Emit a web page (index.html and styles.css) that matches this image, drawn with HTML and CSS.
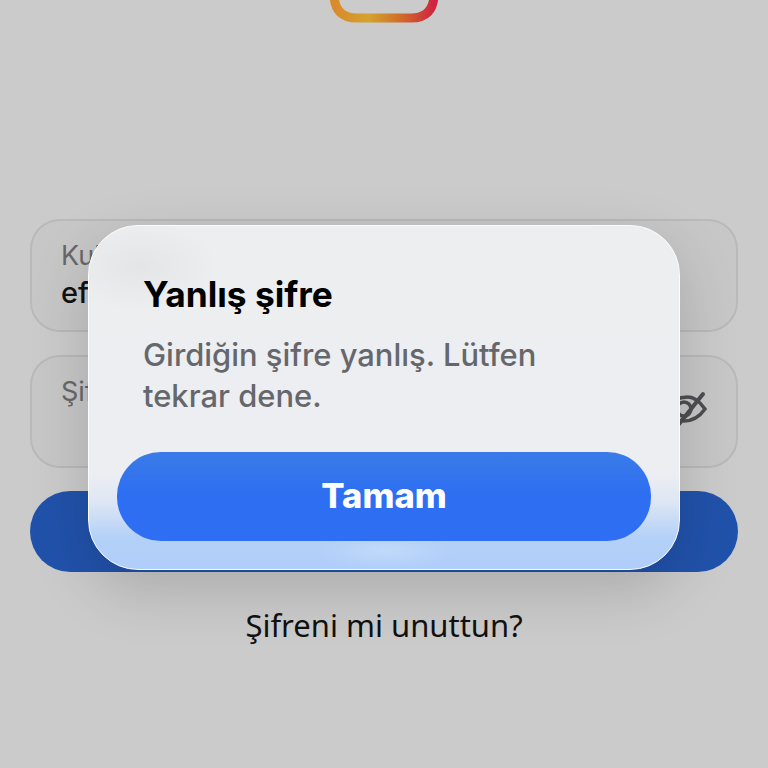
FILE: index.html
```html
<!DOCTYPE html>
<html lang="tr">
<head>
    <meta charset="UTF-8">
    <meta name="viewport" content="width=device-width, initial-scale=1.0">
    <title>Giriş</title>
    <link rel="stylesheet" href="styles.css">
</head>
<body>
    <div class="page">
        <div class="logo">
            <svg width="110" height="23" viewBox="0 0 110 23">
                <defs>
                    <linearGradient id="logo-grad" x1="0" y1="0" x2="1" y2="0">
                        <stop offset="0" stop-color="#d98a2c"/>
                        <stop offset="0.35" stop-color="#d4a22e"/>
                        <stop offset="0.65" stop-color="#d0702a"/>
                        <stop offset="1" stop-color="#d02340"/>
                    </linearGradient>
                </defs>
                <path d="M5 -12 V-6 C5 10 13 18 28 18 H82 C97 18 105 10 105 -6 V-12" fill="none" stroke="url(#logo-grad)" stroke-width="9"/>
            </svg>
        </div>

        <div class="field">
            <div class="field-label">Kullanıcı adı, e-posta veya cep telefonu</div>
            <div class="field-value">efe.y</div>
        </div>

        <div class="field field-password">
            <div class="field-label">Şifre</div>
            <svg class="eye" width="48" height="36" viewBox="0 0 48 36">
                <path d="M3 18 C12 8 22 6 28 6 C35 6 40 11 45 18 C40 25 33 30 24 30 C15 30 8 25 3 18 Z" fill="none" stroke="#4e4e52" stroke-width="3.5"/>
                <circle cx="24" cy="18" r="7" fill="none" stroke="#4e4e52" stroke-width="3.5"/>
                <path d="M43 3 L19 33" fill="none" stroke="#4e4e52" stroke-width="4" stroke-linecap="round"/>
            </svg>
        </div>

        <div class="login-btn"></div>
        <div class="forgot">Şifreni mi unuttun?</div>
    </div>

    <div class="dialog">
        <h2>Yanlış şifre</h2>
        <p>Girdiğin şifre yanlış. Lütfen tekrar dene.</p>
        <button class="ok-btn">Tamam</button>
    </div>
</body>
</html>
```

FILE: styles.css
```css
body {
    font-family: 'Inter', 'Liberation Sans', sans-serif;
    margin: 0;
    padding: 0;
    width: 768px;
    height: 768px;
    overflow: hidden;
    position: relative;
    background-color: #cbcbcb;
}
.page {
    display: flex;
    flex-direction: column;
    gap: 23px;
    padding: 0 30px;
}
.logo {
    display: flex;
    justify-content: center;
    height: 23px;
    margin-bottom: 173px;
}
.field {
    box-sizing: border-box;
    height: 113px;
    padding: 20px 29px 0;
    border: 2px solid #b9b9b9;
    border-radius: 30px;
    background-color: #c7c7c7;
}
.field-label {
    font-size: 27px;
    line-height: 30px;
    color: #68686a;
    white-space: nowrap;
}
.field-value {
    font-size: 29px;
    line-height: 44px;
    font-weight: 500;
    color: #111;
}
.field-password {
    position: relative;
}
.eye {
    position: absolute;
    top: 34px;
    right: 28px;
}
.login-btn {
    height: 81px;
    border-radius: 41px;
    background-color: #2152ab;
}
.forgot {
    margin-top: 10px;
    text-align: center;
    font-family: 'Noto Sans', sans-serif;
    font-size: 31px;
    line-height: 40px;
    color: #111;
}
.dialog {
    position: absolute;
    left: 88px;
    top: 225px;
    box-sizing: border-box;
    width: 592px;
    height: 345px;
    padding: 47px 28px 0;
    border-radius: 50px;
    border: 1.5px solid #fafbfc;
    background:
        radial-gradient(ellipse 80px 45px at 50px 40px, rgba(0, 0, 0, 0.04), transparent),
        radial-gradient(ellipse 70px 18px at 296px 325px, rgba(255, 255, 255, 0.2), transparent),
        linear-gradient(to bottom, #eceef0 0%, #eceef2 72%, #dfe7f4 80%, #b3d0f8 91%, #b0cefa 100%);
    box-shadow: 0 20px 60px rgba(0, 0, 0, 0.16);
}
.dialog h2 {
    margin: 0 0 0 26px;
    font-size: 35.3px;
    line-height: 44px;
    font-weight: 700;
    color: #000;
}
.dialog p {
    margin: 17px 60px 0 26px;
    font-size: 30.9px;
    line-height: 41px;
    font-weight: 500;
    color: #66676c;
}
.ok-btn {
    display: block;
    width: 534px;
    height: 89px;
    margin-top: 36px;
    padding-bottom: 3px;
    border: none;
    border-radius: 44px;
    background: linear-gradient(to bottom, #3a7be8, #2d6ef2 50%);
    color: #fff;
    font-family: inherit;
    font-size: 34.5px;
    font-weight: 800;
}
```
